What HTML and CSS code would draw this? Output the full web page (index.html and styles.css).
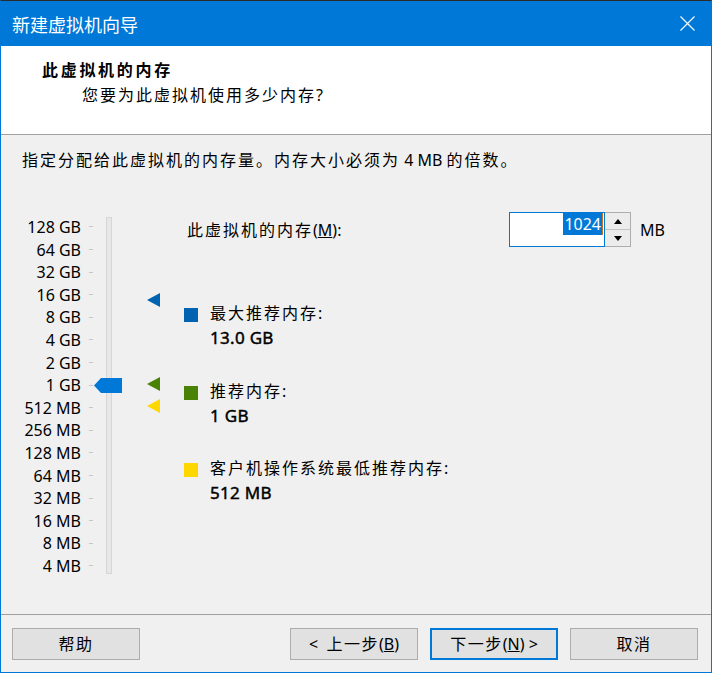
FILE: index.html
```html
<!DOCTYPE html>
<html lang="zh-CN">
<head>
<meta charset="utf-8">
<title>新建虚拟机向导</title>
<link rel="stylesheet" href="styles.css">
</head>
<body>
<div class="window">
  <div class="titlebar">
    <span class="title">新建虚拟机向导</span>
    <svg class="close" width="15" height="15" viewBox="0 0 15 15"><path d="M0.5 0.5 L14.5 14.5 M14.5 0.5 L0.5 14.5" stroke="#ffffff" stroke-width="1.1" fill="none"/></svg>
  </div>
  <div class="header">
    <div class="h-title">此虚拟机的内存</div>
    <div class="h-sub">您要为此虚拟机使用多少内存<span class="lat">?</span></div>
  </div>
  <div class="content">
    <p class="intro">指定分配给此虚拟机的内存量。内存大小必须为<span class="lat"> 4 MB </span>的倍数。</p>
    <div class="main">
      <div class="scale">
        <ul class="labels">
          <li><span class="lbl">128 GB</span><i class="tick"></i></li>
          <li><span class="lbl">64 GB</span><i class="tick"></i></li>
          <li><span class="lbl">32 GB</span><i class="tick"></i></li>
          <li><span class="lbl">16 GB</span><i class="tick"></i></li>
          <li><span class="lbl">8 GB</span><i class="tick"></i></li>
          <li><span class="lbl">4 GB</span><i class="tick"></i></li>
          <li><span class="lbl">2 GB</span><i class="tick"></i></li>
          <li><span class="lbl">1 GB</span><i class="tick"></i></li>
          <li><span class="lbl">512 MB</span><i class="tick"></i></li>
          <li><span class="lbl">256 MB</span><i class="tick"></i></li>
          <li><span class="lbl">128 MB</span><i class="tick"></i></li>
          <li><span class="lbl">64 MB</span><i class="tick"></i></li>
          <li><span class="lbl">32 MB</span><i class="tick"></i></li>
          <li><span class="lbl">16 MB</span><i class="tick"></i></li>
          <li><span class="lbl">8 MB</span><i class="tick"></i></li>
          <li><span class="lbl">4 MB</span><i class="tick"></i></li>
        </ul>
        <div class="track"><div class="thumb" style="top:160px"></div></div>
      </div>
      <div class="markers">
        <i class="mk mk-max" style="top:88px"></i>
        <i class="mk mk-rec" style="top:172px"></i>
        <i class="mk mk-min" style="top:194px"></i>
      </div>
      <div class="panel">
        <div class="mem-row">
          <label class="mem-label">此虚拟机的内存<span class="lat">(<u>M</u>):</span></label>
          <div class="spin">
            <div class="spin-input"><span class="sel">1024</span><i class="caret"></i></div>
            <div class="spin-btns">
              <span class="sbtn"><i class="arrow-up"></i></span>
              <span class="sbtn"><i class="arrow-down"></i></span>
            </div>
          </div>
          <span class="unit">MB</span>
        </div>
        <div class="legend">
          <div class="item">
            <i class="sw sw-max"></i>
            <div class="i-text"><div class="i-label">最大推荐内存<span class="lat">:</span></div><div class="i-val">13.0 GB</div></div>
          </div>
          <div class="item">
            <i class="sw sw-rec"></i>
            <div class="i-text"><div class="i-label">推荐内存<span class="lat">:</span></div><div class="i-val">1 GB</div></div>
          </div>
          <div class="item">
            <i class="sw sw-min"></i>
            <div class="i-text"><div class="i-label">客户机操作系统最低推荐内存<span class="lat">:</span></div><div class="i-val">512 MB</div></div>
          </div>
        </div>
      </div>
    </div>
  </div>
  <div class="footer">
    <button class="btn">帮助</button>
    <span class="spacer"></span>
    <button class="btn"><span class="lat">&lt;&nbsp; </span>上一步<span class="lat">(<u>B</u>)</span></button>
    <button class="btn btn-default">下一步<span class="lat">(<u>N</u>) &gt;</span></button>
    <button class="btn">取消</button>
  </div>
</div>
</body>
</html>
```
FILE: styles.css
```css
* { box-sizing: border-box; }
html, body { margin: 0; padding: 0; }
body {
  font-family: "Noto Sans", "Noto Sans CJK SC", sans-serif;
  font-size: 16px;
  color: #000;
  background: #f0f0f0;
}
.window {
  width: 712px;
  height: 673px;
  display: flex;
  flex-direction: column;
  border-top: 1px solid #2b2b2b;
  border-left: 1px solid #0078d7;
  border-right: 1px solid #0078d7;
  border-bottom: 1px solid #0078d7;
  background: #f0f0f0;
  overflow: hidden;
}
.lat { letter-spacing: 0; }

/* title bar */
.titlebar {
  height: 45px;
  flex: none;
  background: #0078d7;
  display: flex;
  align-items: center;
  padding: 0 16px 0 11px;
  color: #fff;
}
.title {
  font-size: 18px;
  line-height: 24px;
  font-family: "Noto Sans CJK SC", sans-serif;
}
.close { margin-left: auto; display: block; }

/* header */
.header {
  height: 89px;
  flex: none;
  background: #fff;
  border-bottom: 1px solid #a0a0a0;
  padding: 14px 0 0 41px;
}
.h-title {
  font-weight: bold;
  font-size: 16px;
  line-height: 20px;
  letter-spacing: 2.7px;
}
.h-sub {
  margin: 5px 0 0 40px;
  line-height: 20px;
  letter-spacing: 2px;
}

/* content */
.content {
  height: 479px;
  flex: none;
  padding: 15px 0 0 21px;
}
.intro {
  margin: 0;
  line-height: 20px;
  letter-spacing: 2px;
}
.main {
  display: flex;
  margin: 35px 0 0 -21px;
}

/* scale */
.scale { display: flex; flex: none; }
.labels {
  list-style: none;
  margin: 0;
  padding: 10.7px 0 0 0;
}
.labels li {
  height: 22.6px;
  display: flex;
  align-items: center;
}
.lbl {
  width: 80px;
  text-align: right;
  line-height: 20px;
}
.tick {
  display: block;
  width: 4px;
  height: 1px;
  margin-left: 8px;
  background: #c6c6c6;
}
.track {
  position: relative;
  width: 6px;
  height: 357px;
  margin: 12px 0 0 13px;
  background: #e7e7e7;
  border: 1px solid #d6d6d6;
}
.thumb {
  position: absolute;
  left: -13px;
  width: 28px;
  height: 15px;
  background: #0078d7;
  clip-path: polygon(0 50%, 7px 0, 100% 0, 100% 100%, 7px 100%);
}

/* markers */
.markers {
  position: relative;
  width: 60px;
  flex: none;
}
.mk {
  position: absolute;
  left: 35px;
  width: 0;
  height: 0;
  border-top: 7px solid transparent;
  border-bottom: 7px solid transparent;
  border-right: 13px solid #0063b1;
}
.mk-rec { border-right-color: #498205; }
.mk-min { border-right-color: #ffd700; }

/* panel */
.panel {
  margin-left: 12px;
  padding-top: 7px;
}
.mem-row {
  display: flex;
  align-items: center;
  height: 35px;
}
.mem-label {
  width: 325px;
  padding-left: 3px;
  letter-spacing: 2px;
  line-height: 20px;
}
.spin { display: flex; height: 35px; }
.spin-input {
  width: 96px;
  height: 35px;
  background: #fff;
  border: 1px solid #0078d7;
  display: flex;
  justify-content: flex-end;
  align-items: flex-start;
  padding-right: 1px;
}
.sel {
  background: #0078d7;
  color: #fff;
  line-height: 22px;
  padding: 0 1px;
}
.caret {
  display: block;
  width: 1px;
  height: 22px;
  background: #c8741e;
}
.spin-btns {
  width: 26px;
  height: 35px;
  display: flex;
  flex-direction: column;
  border: 1px solid #adadad;
  border-left: none;
}
.sbtn {
  flex: 1;
  display: flex;
  align-items: center;
  justify-content: center;
  background: #ececec;
}
.sbtn + .sbtn { border-top: 1px solid #c4c4c4; }
.arrow-up, .arrow-down {
  width: 0;
  height: 0;
  border-left: 4.5px solid transparent;
  border-right: 4.5px solid transparent;
}
.arrow-up { border-bottom: 5px solid #000; }
.arrow-down { border-top: 5px solid #000; }
.unit {
  margin-left: 9px;
  line-height: 20px;
}

/* legend */
.legend {
  margin-top: 56px;
  display: flex;
  flex-direction: column;
  gap: 32.5px;
}
.item { display: flex; }
.sw {
  display: block;
  width: 14px;
  height: 14px;
  margin-top: 5px;
  flex: none;
}
.sw-max { background: #0063b1; }
.sw-rec { background: #498205; }
.sw-min { background: #ffd700; }
.i-text { margin-left: 12px; }
.i-label {
  line-height: 20px;
  letter-spacing: 2px;
}
.i-val {
  margin-top: 5px;
  line-height: 20px;
  font-size: 17px;
  font-weight: normal;
  -webkit-text-stroke: 0.45px #000;
  letter-spacing: 0.3px;
}

/* footer */
.footer {
  height: 58px;
  flex: none;
  border-top: 1px solid #a0a0a0;
  display: flex;
  align-items: flex-start;
  gap: 12px;
  padding: 13px 13px 0 11px;
}
.spacer { flex: 1; }
.btn {
  width: 128px;
  height: 32px;
  background: #e1e1e1;
  border: 1px solid #adadad;
  font-family: inherit;
  font-size: 16px;
  color: #000;
  letter-spacing: 1.5px;
  padding: 0;
  line-height: 20px;
}
.btn-default { border: 2px solid #0078d7; }
```
